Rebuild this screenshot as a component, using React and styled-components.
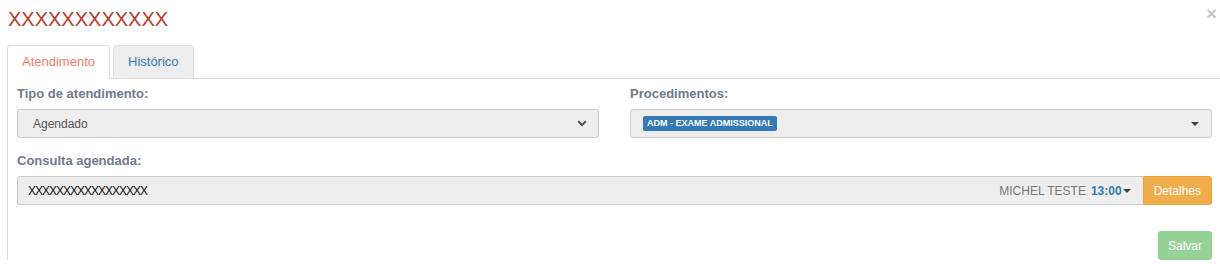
import React from 'react';
import styled, { createGlobalStyle } from 'styled-components';

const GlobalStyle = createGlobalStyle`
  body {
    margin: 0;
    background: #fff;
    font-family: 'Liberation Sans', Arial, sans-serif;
  }
`;

const Modal = styled.div`
  width: 1220px;
  height: 264px;
  overflow: hidden;
  box-sizing: border-box;
`;

const Header = styled.div`
  display: flex;
  justify-content: space-between;
  align-items: flex-start;
  height: 45px;
  padding: 8px 3px 0 8px;
  box-sizing: border-box;
`;

const Title = styled.h4`
  margin: 0;
  font-size: 20px;
  font-weight: normal;
  line-height: 22px;
  color: #b93a2d;
`;

const Close = styled.button`
  border: 0;
  background: transparent;
  padding: 0;
  font-size: 19px;
  font-weight: bold;
  line-height: 1;
  color: #c6c6c6;
  margin-top: -4px;
  cursor: pointer;
`;

const TabList = styled.ul`
  display: flex;
  gap: 3px;
  margin: 0 0 0 7px;
  padding: 0;
  list-style: none;
  border-bottom: 1px solid #ddd;
`;

const Tab = styled.li`
  margin-bottom: -1px;
  padding: 7px 14px;
  font-size: 13px;
  line-height: 18px;
  border: 1px solid #ddd;
  border-bottom-color: ${(p) => (p.active ? '#fff' : '#ddd')};
  border-radius: 4px 4px 0 0;
  background: ${(p) => (p.active ? '#fff' : '#eee')};
  color: ${(p) => (p.active ? '#f47b6b' : '#337ab7')};
`;

const Panel = styled.div`
  margin-left: 7px;
  border-left: 1px solid #ddd;
  padding: 6px 8px 0 9px;
`;

const Row = styled.div`
  display: grid;
  grid-template-columns: 1fr 1fr;
  gap: 31px;
`;

const Field = styled.div`
  display: flex;
  flex-direction: column;
  margin-bottom: ${(p) => p.mb || 0}px;
`;

const Label = styled.label`
  font-size: 13px;
  font-weight: bold;
  line-height: 18px;
  color: #6f7b8a;
  margin-bottom: 6px;
`;

const SelectBox = styled.div`
  display: flex;
  align-items: center;
  justify-content: space-between;
  height: 29px;
  box-sizing: border-box;
  padding: ${(p) => p.pad || '0 11px 0 15px'};
  background: #eee;
  border: 1px solid #ccc;
  border-radius: 3px;
  font-size: 12px;
  color: #555;
`;

const Badge = styled.span`
  display: inline-block;
  background: #337ab7;
  color: #fff;
  font-size: 9px;
  font-weight: bold;
  line-height: 15px;
  padding: 0 4px;
  border-radius: 2px;
`;

const Caret = styled.span`
  width: 0;
  height: 0;
  border-left: 4px solid transparent;
  border-right: 4px solid transparent;
  border-top: 4px solid #444;
  margin-left: ${(p) => p.ml || 0}px;
`;

const InputGroup = styled.div`
  display: flex;
  height: 29px;
`;

const FakeInput = styled.div`
  flex: 1;
  display: flex;
  align-items: center;
  justify-content: space-between;
  padding: 0 12px 0 10px;
  background: #eee;
  border: 1px solid #ccc;
  border-right: 0;
  border-radius: 3px 0 0 3px;
  font-size: 12px;
`;

const Value = styled.span`
  color: #111;
  letter-spacing: -1px;
`;

const Doctor = styled.span`
  display: flex;
  align-items: center;
  color: #777;
  gap: 5px;
`;

const Time = styled.span`
  color: #337ab7;
  font-weight: bold;
  display: flex;
  align-items: center;
`;

const Button = styled.button`
  height: ${(p) => p.h || 29}px;
  padding: 0 ${(p) => p.px || 10}px;
  border: 1px solid ${(p) => p.border};
  background: ${(p) => p.bg};
  color: #fff;
  font-family: inherit;
  font-size: 12px;
  border-radius: ${(p) => p.radius || '3px'};
  cursor: pointer;
`;

const Footer = styled.div`
  display: flex;
  justify-content: flex-end;
  margin-top: 26px;
`;

const Chevron = () => (
  <svg width="10" height="7" viewBox="0 0 10 7">
    <path d="M1.2 1.3 L5 5 L8.8 1.3" fill="none" stroke="#555" strokeWidth="2" />
  </svg>
);

export default function App() {
  return (
    <>
      <GlobalStyle />
      <Modal>
        <Header>
          <Title>XXXXXXXXXXXX</Title>
          <Close>×</Close>
        </Header>
        <TabList>
          <Tab active>Atendimento</Tab>
          <Tab>Histórico</Tab>
        </TabList>
        <Panel>
          <Row>
            <Field mb={14}>
              <Label>Tipo de atendimento:</Label>
              <SelectBox>
                <span>Agendado</span>
                <Chevron />
              </SelectBox>
            </Field>
            <Field mb={14}>
              <Label>Procedimentos:</Label>
              <SelectBox pad="0 12px 0 12px">
                <Badge>ADM - EXAME ADMISSIONAL</Badge>
                <Caret />
              </SelectBox>
            </Field>
          </Row>
          <Field>
            <Label>Consulta agendada:</Label>
            <InputGroup>
              <FakeInput>
                <Value>XXXXXXXXXXXXXXXXX</Value>
                <Doctor>
                  MICHEL TESTE
                  <Time>
                    13:00
                    <Caret ml={1} />
                  </Time>
                </Doctor>
              </FakeInput>
              <Button bg="#f0ad4e" border="#eea236" radius="0 3px 3px 0" px={10}>
                Detalhes
              </Button>
            </InputGroup>
          </Field>
          <Footer>
            <Button bg="#96d296" border="#8fcf8f" px={9}>
              Salvar
            </Button>
          </Footer>
        </Panel>
      </Modal>
    </>
  );
}
